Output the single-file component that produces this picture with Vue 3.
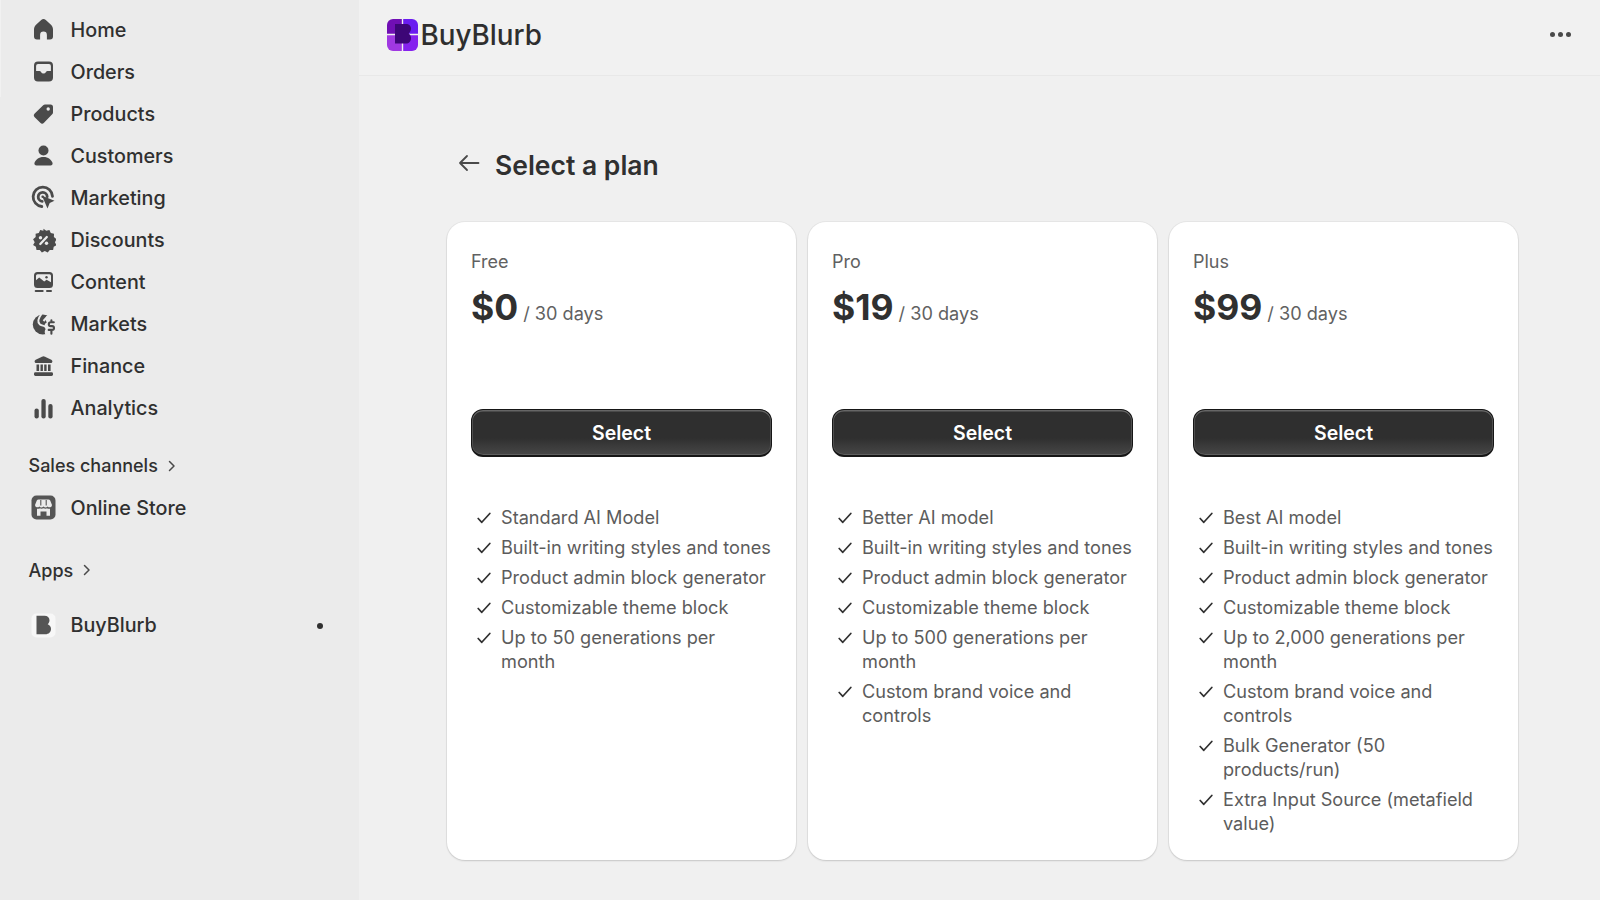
<script setup>
const navItems = [
  { label: 'Home', icon: 'home' },
  { label: 'Orders', icon: 'orders' },
  { label: 'Products', icon: 'products' },
  { label: 'Customers', icon: 'customers' },
  { label: 'Marketing', icon: 'marketing' },
  { label: 'Discounts', icon: 'discounts' },
  { label: 'Content', icon: 'content' },
  { label: 'Markets', icon: 'markets' },
  { label: 'Finance', icon: 'finance' },
  { label: 'Analytics', icon: 'analytics' }
]

const bg = '#ebebeb'
const icons = {
  home: '<path d="M10.200 2.500a3.500 3.500 0 0 1 4.600 0l4.900 4.600c1.400 1.300 2.300 2.900 2.300 4.900V19a3 3 0 0 1-3 3h-3.100v-4.600a3.400 3.400 0 0 0-6.800 0V22H6a3 3 0 0 1-3-3v-7c0-2 .9-3.600 2.300-4.900z"/>',
  orders: '<path fill-rule="evenodd" d="M7 2h11a4 4 0 0 1 4 4v12a4 4 0 0 1-4 4H7a4 4 0 0 1-4-4V6a4 4 0 0 1 4-4zm0 2.500A1.900 1.900 0 0 0 5.100 6.400V11.500h3.400c.7 0 1.200.4 1.500 1a2.800 2.800 0 0 0 5 0c.3-.6.8-1 1.500-1h3.400V6.400A1.900 1.900 0 0 0 18 4.500z"/>',
  products: '<path fill-rule="evenodd" d="M12.200 3.700c.5-.5 1.100-.8 1.800-.8h5.500A2.500 2.500 0 0 1 22 5.400v5.500c0 .7-.3 1.300-.8 1.800l-8.200 8.500a2.600 2.600 0 0 1-3.700 0l-5.600-5.500a2.600 2.600 0 0 1 0-3.700zM17.200 5.800a1.700 1.700 0 1 0 0 3.400 1.700 1.700 0 0 0 0-3.400z"/>',
  customers: '<circle cx="12.500" cy="7" r="5"/><path d="M12.500 13.400c-4.800 0-8 2.700-9 5.900-.5 1.500.6 2.700 2 2.700h14c1.400 0 2.500-1.200 2-2.700-1-3.200-4.200-5.900-9-5.900z"/>',
  marketing: `<g fill="none" stroke="currentColor" stroke-width="2.800" stroke-linecap="round"><path d="M21.500 10.800A9.700 9.700 0 1 0 10.800 21"/><path d="M16.200 11.200a4.500 4.500 0 1 0-5 4.600"/></g><circle cx="11.700" cy="11.300" r="1.300"/><path d="M11 10.300l12.500 4.900-4.800 2.200-2.200 5.600z"/>`,
  discounts: `<path d="M12.500 .2l2.700 2 3.200-.7 1.400 3 3.200.8-.1 3.300 2.600 2.100-1.600 3 1.600 2.900-2.800 1.700-.6 3.300-3.300-.1-2.100 2.600-2.900-1.700-2.900 1.700-2.100-2.600-3.300.1-.6-3.300-2.800-1.700 1.600-2.900-1.600-3 2.600-2.100-.1-3.300 3.200-.8 1.400-3 3.200.7z"/><path d="M15.800 8.500l-6.500 7" stroke="${bg}" stroke-width="2.300" stroke-linecap="round" fill="none"/><circle cx="9.500" cy="9.300" r="1.700" fill="${bg}"/><circle cx="15.500" cy="14.800" r="1.700" fill="${bg}"/>`,
  content: `<path fill-rule="evenodd" d="M6.500 1.500h12a3.500 3.500 0 0 1 3.500 3.500v9a3.500 3.500 0 0 1-3.500 3.500h-12A3.500 3.500 0 0 1 3 14V5a3.500 3.500 0 0 1 3.500-3.500zm0 2.200A1.500 1.500 0 0 0 5 5.200v4.500l3.200-2.700 5 4 2.400-1.800 4.400 2.600V5.200a1.500 1.500 0 0 0-1.500-1.500z"/><circle cx="15.500" cy="6.700" r="1.200"/><rect x="3.700" y="19.400" width="9" height="2.200" rx="1"/><rect x="15" y="19.400" width="6" height="2.200" rx="1"/>`,
  markets: `<circle cx="11.800" cy="12" r="10"/><path d="M25 2h-6.500c-1.800 0-3.300 1.800-3.700 3.800-.4 1.700.3 3 1 4.200-1.300.5-2.300 1.800-2.300 3.500 0 1.300.5 2.300 1.200 3.100-.6.700-1 1.700-1 2.800 0 1.500.7 2.800 1.800 3.600H25z" fill="${bg}"/><path d="M10.500 1.500C7 6 6.500 10 9 12c2 1.500 4 .8 6 2.500M12.500 8.500L16.500 4" fill="none" stroke="${bg}" stroke-width="2"/><path d="M22.800 9.800h-3.100a1.900 1.900 0 0 0 0 3.800h1.400a1.900 1.900 0 0 1 0 3.800h-3.400M20.400 7.900v1.900M20.400 17.400v3.800" fill="none" stroke="currentColor" stroke-width="2.100" stroke-linecap="round"/>`,
  finance: `<path d="M11 2.200a3.400 3.400 0 0 1 3 0l6.300 3.100c1.800.9 1.200 3.300-.6 3.300H5.300c-1.800 0-2.400-2.400-.6-3.300z"/><path d="M5.500 10h2.600v6.400H5.500zM9.500 10h2.400v6.400H9.500zM13.200 10h2.400v6.400h-2.400zM17 10h2.600v6.400H17z"/><rect x="3" y="17.800" width="19" height="3.700" rx="1.400"/>`,
  analytics: '<rect x="3.500" y="12" width="4.300" height="10" rx="2.100"/><rect x="10.400" y="2.500" width="4.300" height="19.500" rx="2.100"/><rect x="17.300" y="7.500" width="4.300" height="14.500" rx="2.100"/>',
  store: `<rect x="0.500" y="0.500" width="24" height="24" rx="5" fill="#555555"/><path d="M7.500 4.500h10c.8 0 1.400.4 1.700 1.100L21 10a2.400 2.400 0 0 1-4.300 1.400 3 3 0 0 1-4.200 0 3 3 0 0 1-4.200 0A2.400 2.400 0 0 1 4 10l1.800-4.400c.3-.7.900-1.100 1.700-1.100z" fill="#ebebeb"/><path d="M6 13.800h2.500v-.6c1.300.6 2.800.6 4 0 1.200.6 2.700.6 4 0v.6H19v7H15.500v-4.300h-6v4.300H6z" fill="#ebebeb"/><path d="M9.800 5v5.500M15.200 5v5.500" stroke="#555555" stroke-width="1.100"/>`,
  blurb: `<rect x="0.500" y="0.500" width="24" height="24" rx="5" fill="#f7f7f7"/><path d="M5.500 2.800h8c3 0 5 1.900 5 4.500 0 1.700-.8 3-1.800 3.900 1.800.9 3.300 2.300 3.300 4.500 0 3.300-2.300 5.500-5.700 5.500H5.500z" fill="#555555"/>`
}

const plans = [
  {
    name: 'Free',
    price: '$0',
    features: [
      'Standard AI Model',
      'Built-in writing styles and tones',
      'Product admin block generator',
      'Customizable theme block',
      'Up to 50 generations per month'
    ]
  },
  {
    name: 'Pro',
    price: '$19',
    features: [
      'Better AI model',
      'Built-in writing styles and tones',
      'Product admin block generator',
      'Customizable theme block',
      'Up to 500 generations per month',
      'Custom brand voice and controls'
    ]
  },
  {
    name: 'Plus',
    price: '$99',
    features: [
      'Best AI model',
      'Built-in writing styles and tones',
      'Product admin block generator',
      'Customizable theme block',
      'Up to 2,000 generations per month',
      'Custom brand voice and controls',
      'Bulk Generator (50 products/run)',
      'Extra Input Source (metafield value)'
    ]
  }
]
</script>

<template>
  <div class="admin">
    <aside class="sidebar">
      <span class="edge" />
      <nav class="nav">
        <a v-for="item in navItems" :key="item.label" class="nav-row">
          <svg class="nav-icon" viewBox="0 0 25 24" fill="currentColor" v-html="icons[item.icon]" />
          {{ item.label }}
        </a>
      </nav>

      <div class="section-title">
        Sales channels
        <svg class="chevron" viewBox="0 0 10 14"><path d="M2.500 2.500L7 7l-4.500 4.500" /></svg>
      </div>
      <a class="nav-row">
        <svg class="nav-icon" viewBox="0 0 25 25" v-html="icons.store" />
        Online Store
      </a>

      <div class="section-title apps">
        Apps
        <svg class="chevron" viewBox="0 0 10 14"><path d="M2.500 2.500L7 7l-4.500 4.500" /></svg>
      </div>
      <a class="nav-row app-row">
        <svg class="nav-icon" viewBox="0 0 25 25" v-html="icons.blurb" />
        BuyBlurb
        <span class="pin-dot" />
      </a>
    </aside>

    <main class="main">
      <header class="topbar">
        <div class="brand">
          <svg class="logo" viewBox="0 0 31 32">
            <path d="M14.800 0H6a6 6 0 0 0-6 6v8.700h14.800z" fill="#700fb4" />
            <path d="M16.200 0H25a6 6 0 0 1 6 6v8.700H16.200z" fill="#6a1cf0" />
            <path d="M14.800 16.200H0V26a6 6 0 0 0 6 6h8.800z" fill="#a038e2" />
            <path d="M16.200 16.200H31V26a6 6 0 0 1-6 6h-8.800z" fill="#8622ee" />
            <path d="M8 5h11c3 0 5 2 5 4.500 0 2-.9 3.700-2.300 5 1.500 1.100 2.300 2.700 2.300 4.700 0 3-2 5.300-5 5.300H8z" fill="#3d0677" />
          </svg>
          <span>BuyBlurb</span>
        </div>
        <div class="more"><i /><i /><i /></div>
      </header>

      <section class="content">
        <div class="page-title">
          <svg class="back" viewBox="0 0 22 18"><path d="M20.500 9H2M9 2L2 9l7 7" /></svg>
          <h1>Select a plan</h1>
        </div>

        <div class="plans">
          <article v-for="plan in plans" :key="plan.name" class="card">
            <div class="plan-name">{{ plan.name }}</div>
            <div class="price">
              <strong>{{ plan.price }}</strong>
              <span>/ 30 days</span>
            </div>
            <button class="select">Select</button>
            <ul class="features">
              <li v-for="feature in plan.features" :key="feature">
                <svg class="check" viewBox="0 0 14 12"><path d="M1.200 6.500L4.800 10.300 12.800 1.500" /></svg>
                <span>{{ feature }}</span>
              </li>
            </ul>
          </article>
        </div>
      </section>
    </main>
  </div>
</template>

<style>
html,
body {
  margin: 0;
  background: #f0f0f0;
}
</style>

<style scoped>
.admin {
  display: flex;
  width: 1600px;
  height: 900px;
  overflow: hidden;
  font-family: Inter, "Liberation Sans", sans-serif;
  color: #303030;
}

.sidebar {
  position: relative;
  flex: 0 0 359px;
  box-sizing: border-box;
  padding-top: 8.500px;
  background: #ebebeb;
}

.edge {
  position: absolute;
  top: 0;
  left: 0;
  width: 1px;
  height: 97px;
  background: #f1f1f1;
}

.nav {
  display: flex;
  flex-direction: column;
}

.nav-row {
  display: flex;
  align-items: center;
  gap: 14.500px;
  height: 42.100px;
  padding-left: 31px;
  font-size: 19.750px;
  font-weight: 500;
  color: #303030;
}

.nav-icon {
  flex: none;
  width: 25px;
  height: 25px;
  color: #4a4a4a;
}

.section-title {
  display: flex;
  align-items: center;
  gap: 9px;
  height: 42px;
  margin-top: 15.500px;
  padding-left: 28.500px;
  font-size: 18px;
  font-weight: 500;
}

.section-title.apps {
  margin-top: 20px;
}

.chevron {
  width: 10px;
  height: 14px;
  fill: none;
  stroke: #4a4a4a;
  stroke-width: 1.500;
  stroke-linecap: round;
  stroke-linejoin: round;
}

.app-row {
  position: relative;
  margin-top: 13px;
}

.pin-dot {
  position: absolute;
  left: 317px;
  top: 19px;
  width: 6px;
  height: 6px;
  border-radius: 50%;
  background: #303030;
}

.main {
  flex: 1;
  display: flex;
  flex-direction: column;
}

.topbar {
  display: flex;
  align-items: center;
  justify-content: space-between;
  box-sizing: border-box;
  height: 76px;
  padding: 0 29px 6px 28px;
  background: #f1f1f1;
  border-bottom: 1px solid #e8e8e8;
}

.brand {
  display: flex;
  align-items: center;
  gap: 2.500px;
  font-size: 27.800px;
  font-weight: 500;
  color: #2e2e2e;
}

.logo {
  width: 31px;
  height: 32px;
}

.more {
  display: flex;
  gap: 3px;
}

.more i {
  width: 5px;
  height: 5px;
  border-radius: 50%;
  background: #4a4a4a;
}

.content {
  padding: 73px 82px 0 88px;
}

.page-title {
  display: flex;
  align-items: center;
  gap: 15.500px;
  height: 32px;
  padding-left: 10.500px;
}

.page-title h1 {
  margin: 0;
  font-size: 26.500px;
  font-weight: 600;
  color: #303030;
}

.back {
  width: 22px;
  height: 18px;
  margin-top: -4px;
  fill: none;
  stroke: #4a4a4a;
  stroke-width: 1.800;
  stroke-linecap: round;
  stroke-linejoin: round;
}

.plans {
  display: grid;
  grid-template-columns: repeat(3, 349px);
  gap: 12px;
  margin-top: 41px;
}

.card {
  box-sizing: border-box;
  height: 638px;
  padding: 28px 24px 24px;
  background: #fff;
  border-radius: 18px;
  box-shadow: 0 1px 2px rgba(0, 0, 0, 0.14), 0 0 0 1px rgba(0, 0, 0, 0.04);
}

.plan-name {
  font-size: 18px;
  line-height: 24px;
  color: #616161;
}

.price {
  display: flex;
  align-items: baseline;
  gap: 5px;
  margin-top: 12px;
  line-height: 44px;
}

.price strong {
  font-size: 35.500px;
  font-weight: 700;
  color: #303030;
}

.price span {
  font-size: 18.150px;
  color: #616161;
}

.select {
  display: block;
  box-sizing: border-box;
  width: 100%;
  height: 48px;
  margin-top: 74px;
  padding: 0;
  font: 600 19.500px Inter, "Liberation Sans", sans-serif;
  color: #fff;
  background: linear-gradient(#2f2f2f 62%, #474747);
  border: 1.500px solid #161616;
  border-bottom-width: 2.500px;
  border-radius: 12px;
  box-shadow: inset 0 1.500px 0 #666666, inset 1px 0 0 #505050, inset -1px 0 0 #505050, inset 0 -1px 0 #5e5e5e;
}

.features {
  display: flex;
  flex-direction: column;
  gap: 6px;
  margin: 48px 0 0;
  padding: 0;
  list-style: none;
}

.features li {
  display: flex;
  font-size: 18.150px;
  line-height: 24px;
  color: #5c5c5c;
}

.check {
  flex: none;
  width: 14px;
  height: 12px;
  margin: 7px 10.500px 0 5.500px;
  fill: none;
  stroke: #303030;
  stroke-width: 1.700;
  stroke-linecap: round;
  stroke-linejoin: round;
}
</style>
